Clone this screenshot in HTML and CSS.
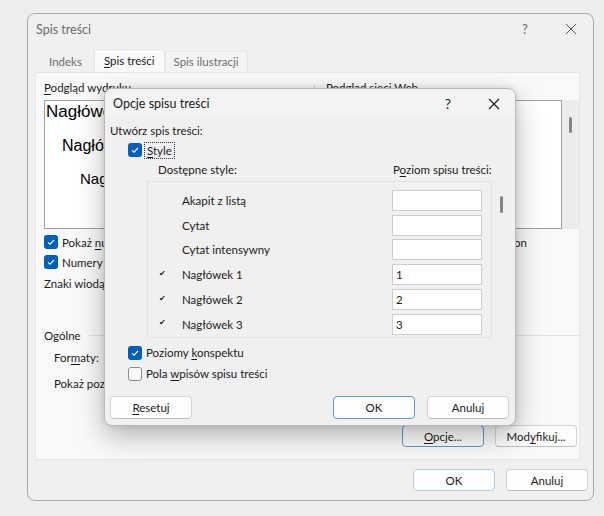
FILE: index.html
```html
<!DOCTYPE html>
<html lang="pl">
<head>
    <meta charset="UTF-8">
    <title>Spis treści</title>
    <link rel="stylesheet" href="styles.css">
</head>
<body>

    <div class="dialog outer">
        <div class="titlebar">
            <span class="title">Spis treści</span>
            <span class="tb-help">?</span>
            <svg class="tb-close" width="12" height="12" viewBox="0 0 12 12"><path d="M1 1L11 11M11 1L1 11" stroke="#555" stroke-width="1"/></svg>
        </div>

        <div class="tabs">
            <div class="tab">Indeks</div>
            <div class="tab active"><u>S</u>pis treści</div>
            <div class="tab">Spis ilustracji</div>
        </div>

        <div class="panel">
            <div class="columns">
                <div class="col-left">
                    <div class="label"><u>P</u>odgląd wydruku</div>
                    <div class="preview">
                        <div class="pv pv1">Nagłówek 1........................1</div>
                        <div class="pv pv2">Nagłówek 2....................3</div>
                        <div class="pv pv3">Nagłówek 3...............5</div>
                    </div>
                    <div class="check-row first"><span class="cb on"></span><span>Pokaż <u>n</u>umery stron</span></div>
                    <div class="check-row"><span class="cb on"></span><span>Numery stron wyrównane do prawej</span></div>
                    <div class="label leader">Znaki wiodące:</div>
                </div>
                <div class="separator"></div>
                <div class="col-right">
                    <div class="label">Podgląd sieci Web</div>
                    <div class="web-wrap">
                        <div class="web-preview"></div>
                        <div class="scrollbar"><div class="thumb"></div></div>
                    </div>
                    <div class="check-row first"><span class="cb on"></span><span>Użyj hiperłączy zamiast numerów stron</span></div>
                </div>
            </div>

            <div class="group">
                <span>Ogólne</span>
                <div class="group-line"></div>
            </div>
            <div class="field">For<u>m</u>aty:</div>
            <div class="field">Pokaż poziomy:</div>

            <div class="panel-buttons">
                <button class="btn default"><u>O</u>pcje...</button>
                <button class="btn">Mod<u>y</u>fikuj...</button>
            </div>
        </div>

        <div class="dialog-buttons">
            <button class="btn default-soft">OK</button>
            <button class="btn">Anuluj</button>
        </div>
    </div>

    <div class="dialog inner">
        <div class="titlebar">
            <span class="title">Opcje spisu treści</span>
            <span class="tb-help">?</span>
            <svg class="tb-close" width="12" height="12" viewBox="0 0 12 12"><path d="M1 1L11 11M11 1L1 11" stroke="#1a1a1a" stroke-width="1.1"/></svg>
        </div>
        <div class="body">
            <div class="label">Utwórz spis treści:</div>
            <div class="check-row style-row"><span class="cb on"></span><span class="focus"><u>S</u>tyle</span></div>
            <div class="list-head">
                <span class="avail-head">Dostępne style:</span>
                <span class="level-head">P<u>o</u>ziom spisu treści:</span>
            </div>
            <div class="list-wrap">
                <div class="list">
                    <div class="row"><span class="mark"></span><span class="name">Akapit z listą</span><span class="input"></span></div>
                    <div class="row"><span class="mark"></span><span class="name">Cytat</span><span class="input"></span></div>
                    <div class="row"><span class="mark"></span><span class="name">Cytat intensywny</span><span class="input"></span></div>
                    <div class="row"><span class="mark">&#10004;</span><span class="name">Nagłówek 1</span><span class="input">1</span></div>
                    <div class="row"><span class="mark">&#10004;</span><span class="name">Nagłówek 2</span><span class="input">2</span></div>
                    <div class="row"><span class="mark">&#10004;</span><span class="name">Nagłówek 3</span><span class="input">3</span></div>
                </div>
                <div class="list-scroll"><div class="thumb"></div></div>
            </div>
            <div class="check-row opt first-opt"><span class="cb on"></span><span>Poziomy <u>k</u>onspektu</span></div>
            <div class="check-row opt"><span class="cb"></span><span>Pola <u>w</u>pisów spisu treści</span></div>
            <div class="inner-buttons">
                <button class="btn"><u>R</u>esetuj</button>
                <span class="spacer"></span>
                <button class="btn default">OK</button>
                <button class="btn">Anuluj</button>
            </div>
        </div>
    </div>

</body>
</html>
```

FILE: styles.css
```css
body {
    margin: 0;
    padding: 13px 0 0 27px;
    height: 516px;
    box-sizing: border-box;
    overflow: hidden;
    background-color: #ededed;
    font-family: "Segoe UI", Lato, "Noto Sans", sans-serif;
    font-size: 11.5px;
    color: #1b1b1b;
}

u {
    text-decoration-thickness: 1px;
    text-underline-offset: 2px;
}

.dialog {
    box-sizing: border-box;
    background-color: #f0f0f0;
    border-radius: 8px;
}

.outer {
    width: 567px;
    height: 488px;
    border: 1px solid #a8a8a8;
    position: relative;
}

.titlebar {
    display: flex;
    align-items: center;
    height: 30px;
    padding-left: 8px;
}

.title {
    flex: 1;
    font-size: 12.5px;
}

.outer .title {
    color: #6a6a6a;
}

.tb-help {
    font-size: 13px;
    width: 24px;
    text-align: center;
}

.outer .tb-help {
    color: #6a6a6a;
}

.tb-close {
    margin: 0 16px 0 28px;
}

.tabs {
    display: flex;
    margin: 8px 0 0 9px;
    height: 20px;
    align-items: flex-end;
}

.tab {
    padding: 0 12px;
    height: 20px;
    line-height: 19px;
    color: #6e6e6e;
}

.tab.active {
    height: 22px;
    line-height: 22px;
    background-color: #f9f9f9;
    color: #1b1b1b;
    border: 1px solid #e6e6e6;
    border-bottom: none;
    padding: 0 9px;
    position: relative;
    z-index: 1;
}

.tab:last-child {
    background-color: #f4f4f4;
    border: 1px solid #e8e8e8;
    border-bottom: none;
    padding: 0 8px;
}

.panel {
    margin-left: 7px;
    width: 545px;
    height: 388px;
    box-sizing: border-box;
    background-color: #f9f9f9;
    border: 1px solid #e6e6e6;
    padding: 7px 0 0 8px;
}

.columns {
    display: flex;
}

.col-left {
    width: 262px;
    flex: none;
}

.separator {
    flex: none;
    width: 1px;
    height: 16px;
    background-color: #d6d6d6;
    margin: 4px 11px 0 8px;
}

.col-right {
    flex: 1;
    min-width: 0;
}

.label {
    height: 16px;
    line-height: 16px;
    white-space: nowrap;
}

.preview {
    margin-top: 4px;
    height: 129px;
    box-sizing: border-box;
    background-color: #fff;
    border: 1px solid #a0a0a0;
    overflow: hidden;
    font-family: "Liberation Sans", Arial, sans-serif;
    font-size: 17px;
    color: #000;
    white-space: nowrap;
}

.pv1 {
    margin: 1px 0 0 1px;
}

.pv2 {
    margin: 15px 0 0 17px;
    font-size: 16px;
}

.pv3 {
    margin: 15px 0 0 35px;
    font-size: 15px;
}

.check-row {
    display: flex;
    align-items: center;
    height: 20px;
    white-space: nowrap;
}

.check-row.first {
    margin-top: 3px;
}

.cb {
    width: 14px;
    height: 14px;
    box-sizing: border-box;
    border-radius: 3px;
    margin-right: 4px;
    border: 1px solid #8b8b8b;
    background-color: #fbfbfb;
    flex: none;
}

.cb.on {
    border: none;
    background: #005fb8 url("data:image/svg+xml;utf8,<svg xmlns='http://www.w3.org/2000/svg' width='14' height='14'><path d='M4 7.3L6 9.2L10 5' fill='none' stroke='white' stroke-width='1.1'/></svg>") no-repeat center;
}

.leader {
    margin-top: 4px;
}

.web-wrap {
    display: flex;
    margin-top: 4px;
    height: 129px;
}

.web-preview {
    flex: 1;
    background-color: #fff;
    border: 1px solid #a0a0a0;
}

.scrollbar {
    width: 17px;
    background-color: #ececec;
    position: relative;
}

.scrollbar .thumb {
    position: absolute;
    left: 7px;
    top: 17px;
    width: 3px;
    height: 16px;
    border-radius: 2px;
    background-color: #858585;
}

.col-right .check-row {
    justify-content: flex-end;
    padding-right: 52px;
}

.group {
    display: flex;
    align-items: center;
    margin-top: 35px;
    height: 16px;
}

.group-line {
    flex: 1;
    height: 1px;
    background-color: #e0e0e0;
    margin: 0 0 0 8px;
}

.field {
    margin: 7px 0 0 10px;
    height: 16px;
    line-height: 16px;
}

.field + .field {
    margin-top: 10px;
}

.panel-buttons {
    display: flex;
    justify-content: flex-end;
    gap: 11px;
    margin: 33px 2px 0 0;
}

.btn {
    width: 82px;
    height: 23px;
    box-sizing: border-box;
    background-color: #fdfdfd;
    border: 1px solid #d3d3d3;
    border-bottom-color: #c0c0c0;
    border-radius: 4px;
    font-family: inherit;
    font-size: 11.5px;
    color: #1b1b1b;
    padding: 0;
}

.panel-buttons .btn {
    height: 22px;
}

.btn.default {
    border: 1px solid #5b9bd5;
}

.btn.default-soft {
    border: 1px solid #b6cde6;
}

.dialog-buttons {
    display: flex;
    justify-content: flex-end;
    gap: 11px;
    margin: 9px 5px 0 0;
}

.dialog-buttons .btn {
    height: 22px;
}

/* the options dialog that floats over the main one */
.inner {
    position: absolute;
    left: 104px;
    top: 88px;
    width: 412px;
    height: 338px;
    border: 1px solid #b9b9b9;
    box-shadow: 0 10px 28px rgba(0, 0, 0, 0.28), 0 0 6px rgba(0, 0, 0, 0.12);
    overflow: hidden;
}

.inner .titlebar {
    background-color: #f3f3f3;
    height: 29px;
}

.inner .tb-help {
    font-size: 14px;
}

.inner .tb-close {
    margin: 0 15px 0 28px;
}

.body {
    padding: 5px 0 0 5px;
}

.style-row {
    margin: 3px 0 0 18px;
    height: 16px;
}

.focus {
    outline: 1px dotted #333;
    padding: 0 2px;
    line-height: 15px;
    margin-left: -1px;
}

.list-head {
    display: flex;
    margin: 4px 0 0 48px;
    height: 16px;
    line-height: 16px;
}

.avail-head {
    width: 235px;
    flex: none;
}

.list-wrap {
    display: flex;
    margin: 3px 0 0 37px;
}

.list {
    width: 345px;
    height: 157px;
    box-sizing: border-box;
    border: 1px solid #e3e3e3;
    padding-top: 6px;
}

.row {
    display: flex;
    align-items: center;
    height: 24.8px;
}

.mark {
    width: 34px;
    padding-left: 11px;
    box-sizing: border-box;
    font-size: 8px;
    margin-bottom: 4px;
}

.name {
    width: 210px;
}

.input {
    width: 90px;
    height: 21px;
    box-sizing: border-box;
    background-color: #fff;
    border: 1px solid #cdcdcd;
    padding-left: 3px;
    line-height: 19px;
}

.list-scroll {
    width: 17px;
    position: relative;
}

.list-scroll .thumb {
    position: absolute;
    left: 8px;
    top: 15px;
    width: 3px;
    height: 17px;
    border-radius: 2px;
    background-color: #858585;
}

.opt {
    margin-left: 18px;
    height: 21px;
}

.first-opt {
    margin-top: 4px;
}

.inner-buttons {
    display: flex;
    gap: 12px;
    margin: 12px 0 0 0;
    padding-right: 6px;
}

.inner-buttons .spacer {
    flex: 1;
}
```
